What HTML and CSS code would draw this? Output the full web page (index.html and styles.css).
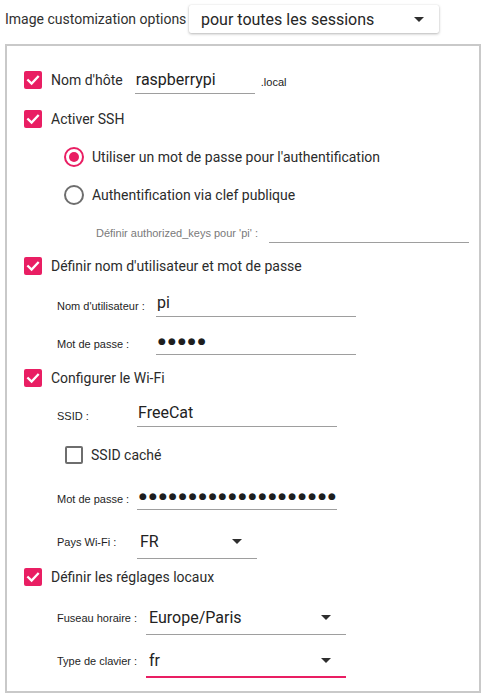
FILE: index.html
```html
<!DOCTYPE html>
<html lang="fr">
<head>
<meta charset="utf-8">
<title>Image customization options</title>
<link rel="stylesheet" href="styles.css">
</head>
<body>
<div class="page">
  <header class="top">
    <span class="top-label">Image customization options</span>
    <div class="select-card">
      <span>pour toutes les sessions</span>
      <span class="arrow"></span>
    </div>
  </header>

  <section class="frame">
    <div class="row cb-row first">
      <span class="cb on"><svg viewBox="0 0 18 18" width="18" height="18"><path d="M4.2 9.3 L7.6 12.6 L13.9 5.9" fill="none" stroke="#fff" stroke-width="2.3" stroke-linecap="square"/></svg></span>
      <span class="lbl">Nom d'hôte</span>
      <span class="field host">raspberrypi</span>
      <span class="suffix">.local</span>
    </div>

    <div class="row cb-row mt-9">
      <span class="cb on"><svg viewBox="0 0 18 18" width="18" height="18"><path d="M4.2 9.3 L7.6 12.6 L13.9 5.9" fill="none" stroke="#fff" stroke-width="2.3" stroke-linecap="square"/></svg></span>
      <span class="lbl">Activer SSH</span>
    </div>

    <div class="row radio-row mt-8">
      <span class="radio on"><span class="dot"></span></span>
      <span class="lbl">Utiliser un mot de passe pour l'authentification</span>
    </div>

    <div class="row radio-row mt-8">
      <span class="radio"></span>
      <span class="lbl">Authentification via clef publique</span>
    </div>

    <div class="row keys-row mt-8">
      <span class="keys-lbl">Définir authorized_keys pour 'pi' :</span>
      <span class="field keys"></span>
    </div>

    <div class="row cb-row mt-3">
      <span class="cb on"><svg viewBox="0 0 18 18" width="18" height="18"><path d="M4.2 9.3 L7.6 12.6 L13.9 5.9" fill="none" stroke="#fff" stroke-width="2.3" stroke-linecap="square"/></svg></span>
      <span class="lbl">Définir nom d'utilisateur et mot de passe</span>
    </div>

    <div class="row sub-row user-grid mt-8">
      <span class="sub-lbl">Nom d'utilisateur :</span>
      <span class="field wide">pi</span>
    </div>

    <div class="row sub-row user-grid mt-8">
      <span class="sub-lbl">Mot de passe :</span>
      <span class="field wide dots">●●●●●</span>
    </div>

    <div class="row cb-row mt-6">
      <span class="cb on"><svg viewBox="0 0 18 18" width="18" height="18"><path d="M4.2 9.3 L7.6 12.6 L13.9 5.9" fill="none" stroke="#fff" stroke-width="2.3" stroke-linecap="square"/></svg></span>
      <span class="lbl">Configurer le Wi-Fi</span>
    </div>

    <div class="row sub-row wifi-grid mt-6">
      <span class="sub-lbl">SSID :</span>
      <span class="field wide">FreeCat</span>
    </div>

    <div class="row hidden-row mt-11">
      <span class="cb off"></span>
      <span class="lbl">SSID caché</span>
    </div>

    <div class="row sub-row wifi-grid mt-12">
      <span class="sub-lbl">Mot de passe :</span>
      <span class="field wide dots">●●●●●●●●●●●●●●●●●●●●</span>
    </div>

    <div class="row sub-row combo-row wifi-grid mt-13">
      <span class="sub-lbl">Pays Wi-Fi :</span>
      <span class="combo short"><span>FR</span><span class="arrow"></span></span>
    </div>

    <div class="row cb-row mt-7">
      <span class="cb on"><svg viewBox="0 0 18 18" width="18" height="18"><path d="M4.2 9.3 L7.6 12.6 L13.9 5.9" fill="none" stroke="#fff" stroke-width="2.3" stroke-linecap="square"/></svg></span>
      <span class="lbl">Définir les réglages locaux</span>
    </div>

    <div class="row sub-row combo-row locale-grid mt-9">
      <span class="sub-lbl">Fuseau horaire :</span>
      <span class="combo wide"><span>Europe/Paris</span><span class="arrow"></span></span>
    </div>

    <div class="row sub-row combo-row locale-grid mt-13">
      <span class="sub-lbl">Type de clavier :</span>
      <span class="combo wide focused"><span>fr</span><span class="arrow"></span></span>
    </div>
  </section>
</div>
</body>
</html>
```

FILE: styles.css
```css
* { box-sizing: border-box; }

html, body {
  margin: 0;
  padding: 0;
  background: #ffffff;
}

body {
  font-family: Roboto, "Liberation Sans", sans-serif;
  color: #2b2b2b;
}

.page {
  width: 484px;
  height: 698px;
  padding: 5px 3px 0 5px;
}

/* header */
.top {
  display: flex;
  align-items: center;
  height: 28px;
}

.top-label {
  font-size: 14px;
  color: #303030;
  width: 184px;
}

.select-card {
  width: 250px;
  height: 28px;
  display: flex;
  align-items: center;
  justify-content: space-between;
  padding: 0 15px 0 12px;
  font-size: 16px;
  color: #262626;
  background: #fff;
  border-radius: 2px;
  box-shadow: 0 1px 3px rgba(0, 0, 0, 0.28), 0 0 1px rgba(0, 0, 0, 0.12);
}

.arrow {
  width: 0;
  height: 0;
  border-left: 5px solid transparent;
  border-right: 5px solid transparent;
  border-top: 5px solid #2e2e2e;
}

/* frame */
.frame {
  margin-top: 11px;
  width: 476px;
  height: 649px;
  border: 2px solid #c9c9c9;
  padding: 19px 0 0 17px;
  display: flex;
  flex-direction: column;
}

.row {
  height: 30px;
  display: flex;
  align-items: center;
  flex-shrink: 0;
}

.mt-3 { margin-top: 3px; }
.mt-6 { margin-top: 6px; }
.mt-7 { margin-top: 7px; }
.mt-8 { margin-top: 8px; }
.mt-9 { margin-top: 9px; }
.mt-11 { margin-top: 11px; }
.mt-12 { margin-top: 12px; }
.mt-13 { margin-top: 13px; }

.lbl {
  font-size: 14px;
  color: #2b2b2b;
}

/* checkboxes */
.cb-row { gap: 9px; }

.cb {
  width: 18px;
  height: 18px;
  border-radius: 2px;
  flex-shrink: 0;
  display: block;
}

.cb svg { display: block; }

.cb.on { background: #e91e63; }

.cb.off {
  border: 2px solid #6e6e6e;
  background: #fff;
}

.hidden-row {
  padding-left: 41px;
  gap: 8px;
}

/* radios */
.radio-row {
  padding-left: 40px;
  gap: 8px;
}

.radio {
  width: 20px;
  height: 20px;
  border-radius: 50%;
  border: 2px solid #6e6e6e;
  display: flex;
  align-items: center;
  justify-content: center;
  flex-shrink: 0;
}

.radio.on { border-color: #e91e63; }

.radio .dot {
  width: 10px;
  height: 10px;
  border-radius: 50%;
  background: #e91e63;
}

/* fields */
.field {
  display: flex;
  align-items: center;
  height: 26px;
  padding-left: 1px;
  font-size: 16px;
  color: #222;
  border-bottom: 1px solid #9e9e9e;
}

.field.host {
  width: 120px;
  height: 28px;
  margin-left: 3px;
}

.suffix {
  font-family: "Liberation Sans", Arial, sans-serif;
  font-size: 11px;
  color: #222;
  margin-left: -3px;
  padding-top: 4px;
}

.keys-row {
  padding-left: 72px;
  gap: 10px;
}

.keys-lbl {
  font-family: "Liberation Sans", Arial, sans-serif;
  font-size: 11px;
  color: #7a7a7a;
  width: 163px;
}

.field.keys {
  width: 200px;
  height: 20px;
}

.sub-row {
  display: grid;
  padding-left: 33px;
  align-items: center;
}

.user-grid { grid-template-columns: 99px 200px; }
.wifi-grid { grid-template-columns: 80px 200px; }
.locale-grid { grid-template-columns: 89px 200px; }

.sub-lbl {
  font-family: "Liberation Sans", Arial, sans-serif;
  font-size: 11px;
  color: #1e1e1e;
  padding-top: 4px;
}

.combo-row .sub-lbl { padding-top: 0; }

.field.wide { width: 200px; padding-bottom: 2px; }

.dots {
  font-family: "DejaVu Sans", sans-serif;
  font-size: 9px;
  letter-spacing: 2.1px;
  padding-left: 2px;
  color: #1e1e1e;
}

.combo {
  display: flex;
  align-items: center;
  justify-content: space-between;
  height: 34px;
  padding: 0 15px 0 3px;
  font-size: 16px;
  color: #222;
  border-bottom: 1px solid #9e9e9e;
}

.combo.short { width: 120px; }
.combo.wide { width: 200px; }

.combo.focused { border-bottom: 2px solid #e91e63; }
```
